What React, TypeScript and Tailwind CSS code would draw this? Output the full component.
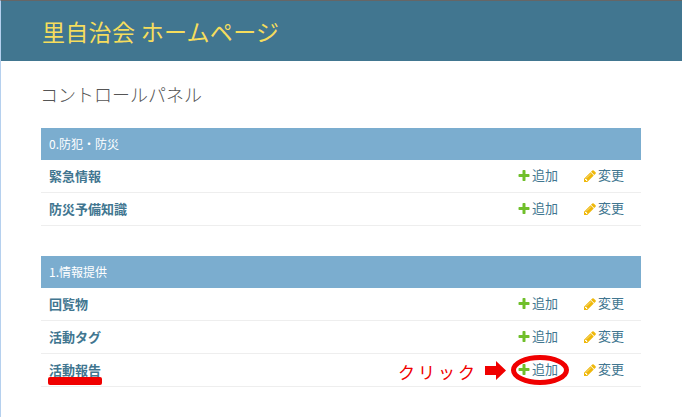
import React from "react";

const font = { fontFamily: '"Noto Sans CJK JP", sans-serif' };

function PlusIcon() {
  return (
    <svg viewBox="0 0 1792 1792" className="w-[14px] h-[14px] mr-px mt-[2px]">
      <path
        fill="#70bf2b"
        d="M1600 736v192q0 40-28 68t-68 28h-416v416q0 40-28 68t-68 28h-192q-40 0-68-28t-28-68v-416h-416q-40 0-68-28t-28-68v-192q0-40 28-68t68-28h416v-416q0-40 28-68t68-28h192q40 0 68 28t28 68v416h416q40 0 68 28t28 68z"
      />
    </svg>
  );
}

function PencilIcon() {
  return (
    <svg viewBox="0 0 1792 1792" className="w-[14px] h-[14px] mr-px mt-[2px]">
      <path
        fill="#efb80b"
        d="M491 1536l91-91-235-235-91 91v107h128v128h107zm523-928q0-22-22-22-10 0-17 7l-542 542q-7 7-7 17 0 22 22 22 10 0 17-7l542-542q7-7 7-17zm-54-192l416 416-832 832h-416v-416zm683 96q0 53-37 90l-166 166-416-416 166-165q36-38 90-38 53 0 91 38l235 234q37 39 37 91z"
      />
    </svg>
  );
}

function Row({ name, children }: { name: string; children?: React.ReactNode }) {
  return (
    <div className="relative flex items-center h-[33px] pl-2 pr-[17px] border-b border-[#eeeeee]">
      <a className="flex-1 text-[13px] font-bold text-[#417690] -mt-px">{name}</a>
      <a className="flex items-center w-[66px] text-[13px] text-[#417690] -mt-[2px]">
        <PlusIcon />
        追加
      </a>
      <a className="flex items-center text-[13px] text-[#417690] -mt-[2px]">
        <PencilIcon />
        変更
      </a>
      {children}
    </div>
  );
}

function Module({ title, rows }: { title: string; rows: React.ReactNode }) {
  return (
    <section className="mb-[30px]">
      <div className="flex items-center h-8 pl-2 text-[12px] text-white bg-[#7badcf]">{title}</div>
      {rows}
    </section>
  );
}

export default function App() {
  return (
    <div className="h-[417px] w-[682px] overflow-hidden bg-white" style={font}>
      <header className="flex items-center h-[61px] pl-[41px] border-t border-t-[#666666] border-l border-l-[#b5d0ee] bg-[#417690]">
        <h1 className="text-[23px] tracking-[0.3px] text-[#f5dd5d]">里自治会 ホームページ</h1>
      </header>
      <main className="h-[356px] w-[641px] pl-10 pt-5 border-l border-[#b5d0ee]">
        <h2 className="h-[47px] -ml-px text-[18px] font-light text-[#555555]">コントロールパネル</h2>
        <Module
          title="0.防犯・防災"
          rows={
            <>
              <Row name="緊急情報" />
              <Row name="防災予備知識" />
            </>
          }
        />
        <Module
          title="1.情報提供"
          rows={
            <>
              <Row name="回覧物" />
              <Row name="活動タグ" />
              <Row name="活動報告">
                <div className="absolute left-[7px] top-[23px] h-2 w-[54px] rounded-[2px] bg-[#f00000]" />
                <div className="absolute left-[357px] top-[5px] text-[17px] tracking-[3px] text-[#f00000]">クリック</div>
                <svg className="absolute left-[444px] top-[7px] w-[21px] h-[19px]" viewBox="0 0 21 19">
                  <path fill="#f00000" d="M0 5h11V0l10 9.5L11 19v-5H0z" />
                </svg>
                <svg className="absolute left-[470px] top-[1px] w-[58px] h-[30px]" viewBox="0 0 58 30">
                  <ellipse cx="29" cy="15" rx="26.5" ry="12.5" fill="none" stroke="#f00000" strokeWidth="5" />
                </svg>
              </Row>
            </>
          }
        />
      </main>
    </div>
  );
}
